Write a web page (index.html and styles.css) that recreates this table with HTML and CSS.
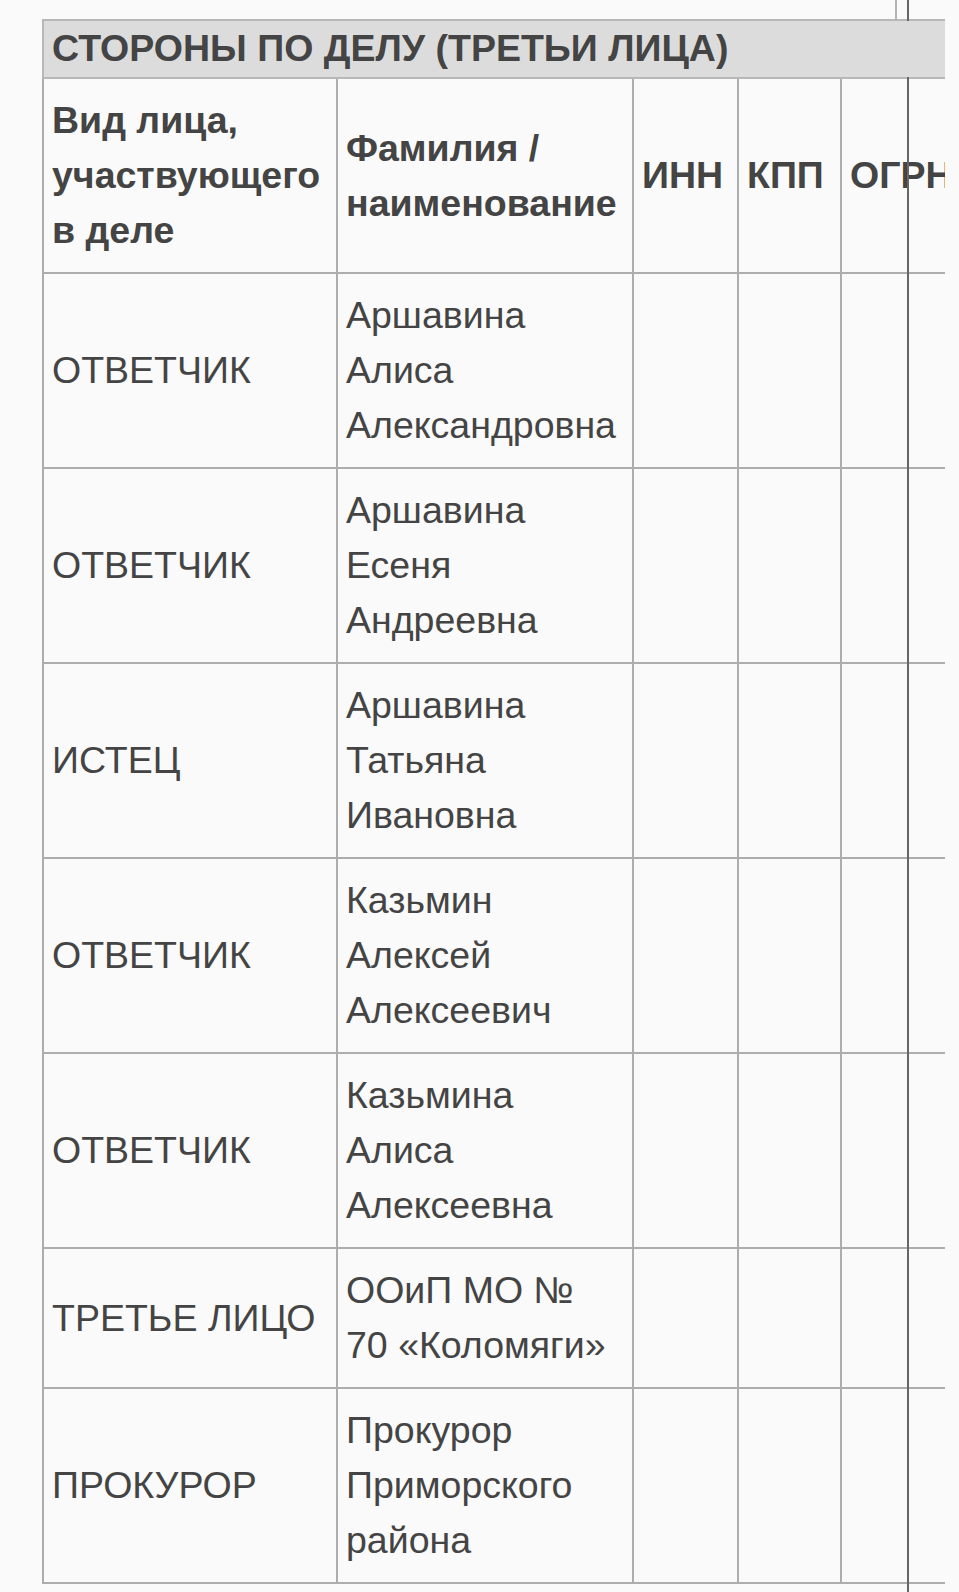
FILE: index.html
```html
<!DOCTYPE html>
<html lang="ru">
<head>
<meta charset="utf-8">
<title>Стороны по делу</title>
<link rel="stylesheet" href="styles.css">
</head>
<body>
<div class="page">
  <div class="stub"></div>
  <div class="divider"></div>
  <div class="scroller">
    <table class="parties">
      <colgroup>
        <col class="c-kind">
        <col class="c-name">
        <col class="c-inn">
        <col class="c-kpp">
        <col class="c-ogrn">
      </colgroup>
      <thead>
        <tr>
          <th class="title" colspan="5"><span class="title-text">СТОРОНЫ ПО ДЕЛУ (ТРЕТЬИ ЛИЦА)</span></th>
        </tr>
        <tr class="head">
          <th>Вид лица, участвующего в деле</th>
          <th>Фамилия / наименование</th>
          <th>ИНН</th>
          <th>КПП</th>
          <th>ОГРН</th>
        </tr>
      </thead>
      <tbody>
        <tr><td>ОТВЕТЧИК</td><td>Аршавина Алиса Александровна</td><td></td><td></td><td></td></tr>
        <tr><td>ОТВЕТЧИК</td><td>Аршавина Есеня Андреевна</td><td></td><td></td><td></td></tr>
        <tr><td>ИСТЕЦ</td><td>Аршавина Татьяна Ивановна</td><td></td><td></td><td></td></tr>
        <tr><td>ОТВЕТЧИК</td><td>Казьмин Алексей Алексеевич</td><td></td><td></td><td></td></tr>
        <tr><td>ОТВЕТЧИК</td><td>Казьмина Алиса Алексеевна</td><td></td><td></td><td></td></tr>
        <tr><td>ТРЕТЬЕ ЛИЦО</td><td>ООиП МО №<br>70 «Коломяги»</td><td></td><td></td><td></td></tr>
        <tr><td>ПРОКУРОР</td><td>Прокурор Приморского района</td><td></td><td></td><td></td></tr>
      </tbody>
    </table>
  </div>
</div>
</body>
</html>
```

FILE: styles.css
```css
html, body {
  margin: 0;
  padding: 0;
  background: #fafafa;
}

.page {
  position: relative;
  min-height: 1592px;
  padding: 19px 0 0 42px;
  box-sizing: border-box;
  font-family: "Liberation Sans", Arial, Helvetica, sans-serif;
  color: #444;
}

.stub {
  position: absolute;
  left: 895px;
  top: 0;
  width: 2px;
  height: 20px;
  background: #b5b5b5;
}

.divider {
  position: absolute;
  left: 907px;
  top: 0;
  bottom: 0;
  width: 2px;
  background: #666;
  z-index: 1;
}

.scroller {
  width: 903px;
  overflow: hidden;
}

.parties {
  border-collapse: collapse;
  table-layout: fixed;
  width: 998px;
  font-size: 37.5px;
  line-height: 55px;
}

.c-kind { width: 294px; }
.c-name { width: 296px; }
.c-inn { width: 105px; }
.c-kpp { width: 103px; }
.c-ogrn { width: 200px; }

.parties th,
.parties td {
  border: 2px solid #adadad;
  padding: 14px 8px;
  text-align: left;
  vertical-align: middle;
  overflow: hidden;
}

.parties th {
  font-weight: bold;
}

.parties th.title {
  position: relative;
  z-index: 2;
  background: #dcdcdc;
  padding: 0 8px 1px;
  white-space: nowrap;
  border-color: #b8b8b8;
}

.parties td {
  font-weight: normal;
}
```
